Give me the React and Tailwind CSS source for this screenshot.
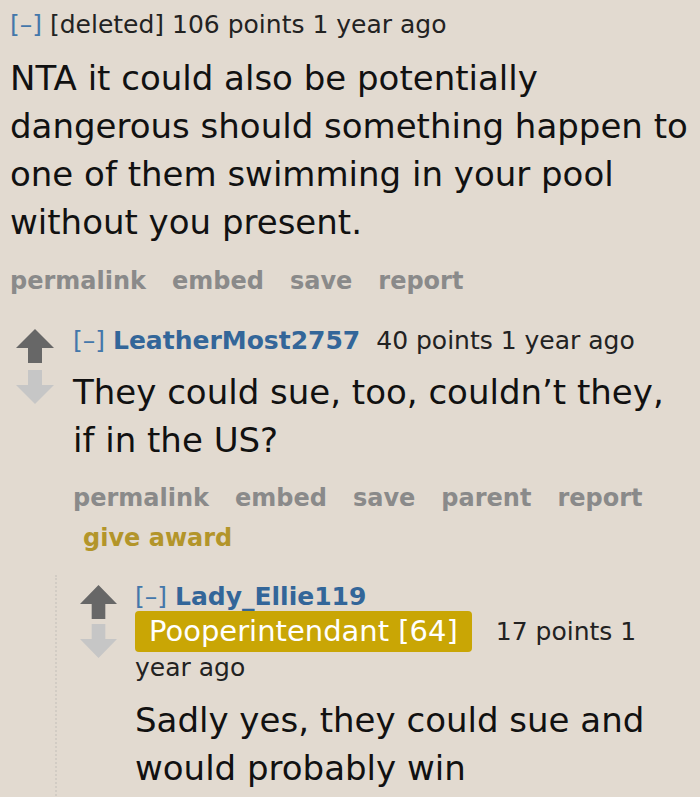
const VERDANA = { fontFamily: '"DejaVu Sans", Verdana, sans-serif' };

function Arrow({ down, color, w }) {
  return (
    <svg width={w} height="34" viewBox="0 0 38 34" preserveAspectRatio="none" className={down ? "rotate-180" : ""}>
      <polygon points="19,0 38,19 26,19 26,34 12,34 12,19 0,19" fill={color} />
    </svg>
  );
}

function Votes({ w = 38, gap = "gap-[7px]" }) {
  return (
    <div className={`flex shrink-0 flex-col ${gap}`}>
      <Arrow w={w} color="#676767" />
      <Arrow w={w} down color="#c6c6c6" />
    </div>
  );
}

function Actions({ items, award }) {
  return (
    <div className="text-[24px] font-bold leading-[40px] text-[#8a8a8a]">
      <div className="flex gap-[26px]">
        {items.map((a) => (
          <span key={a}>{a}</span>
        ))}
      </div>
      {award && <div className="pl-[10px] text-[#b3952a]">give award</div>}
    </div>
  );
}

export default function App() {
  return (
    <div className="min-h-[797px] w-[700px] overflow-hidden bg-[#e2dad0] text-[#111111]" style={VERDANA}>
      <div className="pl-[10px] pt-[9px]">
        <div className="text-[25px] leading-[32px] text-[#222222]">
          <span className="text-[#4477aa]">[–]</span> [deleted] 106 points 1 year ago
        </div>
        <div className="mt-[13px] text-[34px] leading-[48px]">
          NTA it could also be potentially dangerous should something happen to one of them swimming in your pool without you present.
        </div>
        <div className="mt-[15px]">
          <Actions items={["permalink", "embed", "save", "report"]} />
        </div>
      </div>

      <div className="mt-[24px] flex pl-[16px]">
        <div className="pt-[4px]">
          <Votes />
        </div>
        <div className="ml-[19px] flex-1">
          <div className="whitespace-nowrap text-[25px] leading-[32px] text-[#222222]">
            <span className="text-[#4477aa]">[–]</span>{" "}
            <span className="font-bold text-[#336699]">LeatherMost2757</span>
            <span className="ml-[16px]">40 points 1 year ago</span>
          </div>
          <div className="mt-[11px] w-[600px] text-[34px] leading-[48px]">
            They could sue, too, couldn’t they, if in the US?
          </div>
          <div className="mt-[14px]">
            <Actions items={["permalink", "embed", "save", "parent", "report"]} award />
          </div>
          <div className="-ml-[18px] mt-[17px] flex border-l-2 border-dotted border-[#d2ccc4] pl-[23px] pt-[7px] pb-[20px]">
            <div className="pt-[3px]">
              <Votes w={37} gap="gap-[5px]" />
            </div>
            <div className="ml-[18px] flex-1">
              <div className="text-[25px] leading-[30px]">
                <span className="text-[#4477aa]">[–]</span>{" "}
                <span className="font-bold text-[#336699]">Lady_Ellie119</span>
              </div>
              <div className="-mt-[1px] flex items-center">
                <span className="rounded-[4px] bg-[#c9a605] px-[14px] text-[29px] leading-[41px] text-white">
                  Pooperintendant [64]
                </span>
                <span className="ml-[24px] text-[25px] text-[#222222]">17 points 1</span>
              </div>
              <div className="text-[25px] leading-[32px] text-[#222222]">year ago</div>
              <div className="mt-[12px] text-[34px] leading-[48px]">
                Sadly yes, they could sue and would probably win
              </div>
            </div>
          </div>
        </div>
      </div>
    </div>
  );
}
